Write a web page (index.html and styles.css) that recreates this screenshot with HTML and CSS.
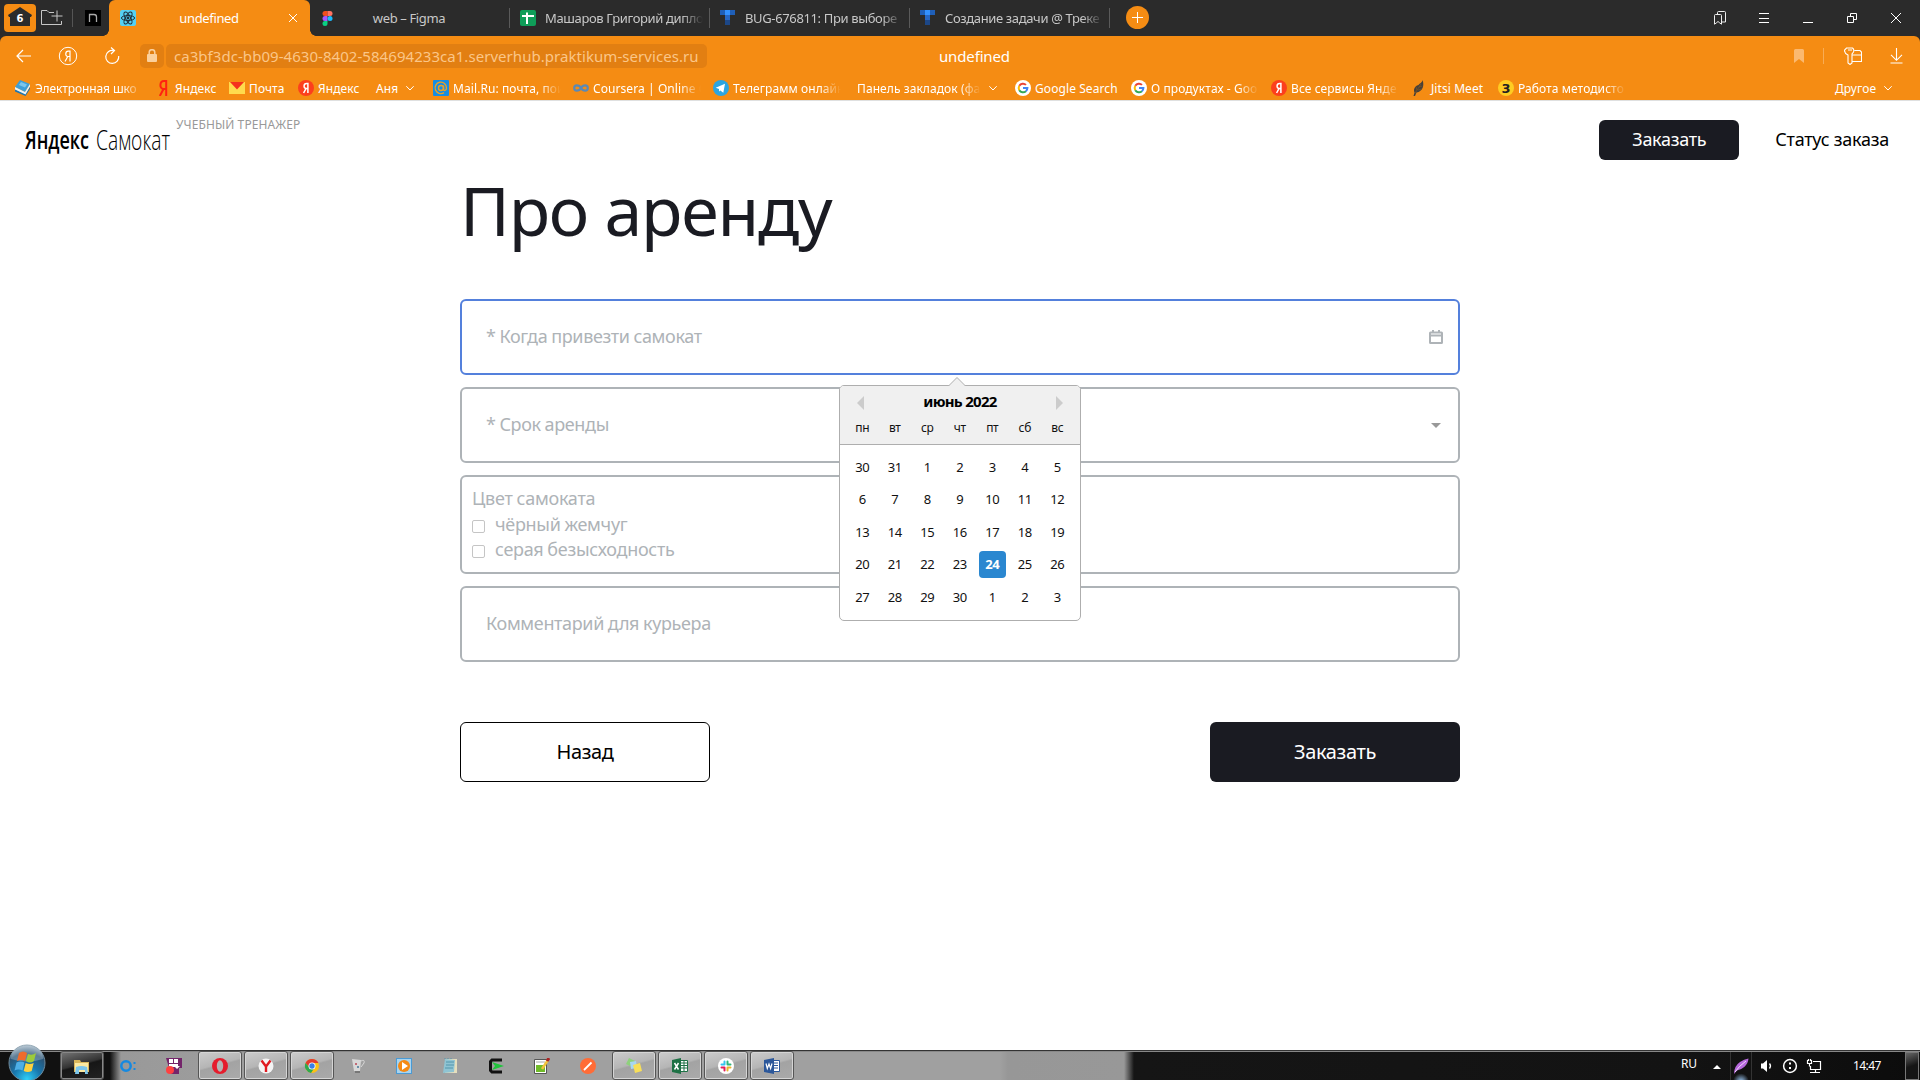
FILE: index.html
```html
<!DOCTYPE html>
<html lang="ru">
<head>
<meta charset="utf-8">
<title>undefined</title>
<link rel="stylesheet" href="styles.css">
</head>
<body>
<svg class="defs" width="0" height="0">
  <symbol id="tracker" viewBox="0 0 16 16"><path fill="#1f5fb8" d="M0 0h15v5H0z"/><path fill="#3391ff" d="M5 0h5v5H5z"/><path fill="#2767c4" d="M5 5h5v5H5z"/><path fill="#1c4787" d="M5 10h5v5H5z"/></symbol>
  <symbol id="google" viewBox="0 0 16 16"><circle cx="8" cy="8" r="8" fill="#fff"/><g fill="none" stroke-width="2"><path stroke="#ea4335" d="M4.3 5.8A4.3 4.3 0 0 1 11 4.9"/><path stroke="#fbbc05" d="M4.3 10.2a4.4 4.4 0 0 1 0-4.4"/><path stroke="#34a853" d="M4.3 10.2a4.3 4.3 0 0 0 6.6 1"/><path stroke="#4285f4" d="M10.9 11.2A4.3 4.3 0 0 0 12.4 8H8"/></g></symbol>
  <symbol id="yandex" viewBox="0 0 16 16"><circle cx="8" cy="8" r="8" fill="#fc3f1d"/><path fill="none" stroke="#fff" stroke-width="1.5" d="M9.9 13V3.4H8.6C5.3 3.4 5.3 8.5 8.2 8.5h1.5M8.1 8.4 5.6 13"/></symbol>
  <symbol id="chevron" viewBox="0 0 8 8"><path fill="none" stroke="#fff" d="M.3 2.2 4 6l3.700-3.800"/></symbol>
</svg>

<header class="browser">
  <div class="tabs">
    <div class="tools">
      <svg width="32" height="28" viewBox="0 0 32 28"><rect width="32" height="28" rx="4" fill="#f58c13"/><path fill="#2b2b2b" d="M16 3 28 11l-1 2h-1v9H6v-9H5l-1-2z"/><text x="16" y="18" class="count">6</text></svg>
      <svg class="folder" width="24" height="18" viewBox="0 0 24 18"><path fill="none" stroke="#c7c7c7" d="M14 3.500H9L7 1.500H1.500v14h20V12M17 1.500v11M11.500 7h11"/></svg>
      <i class="bar"></i>
      <svg class="n" width="16" height="16" viewBox="0 0 16 16"><path d="M0 0h16v16H0z"/><path fill="none" stroke="#aaa" stroke-width="1.300" d="M4.500 12V4.500H9a2.500 2.500 0 0 1 2.500 2.500v5"/></svg>
    </div>
    <div class="tab active">
      <svg width="16" height="16" viewBox="0 0 16 16"><rect width="16" height="16" rx="2" fill="#55d1f3"/><g fill="none" stroke="#20303a"><ellipse cx="8" cy="8" rx="6.600" ry="2.500"/><ellipse cx="8" cy="8" rx="6.600" ry="2.500" transform="rotate(60 8 8)"/><ellipse cx="8" cy="8" rx="6.600" ry="2.500" transform="rotate(120 8 8)"/></g><circle cx="8" cy="8" r="1.400" fill="#20303a"/></svg>
      <span>undefined</span>
      <svg width="10" height="10" viewBox="0 0 10 10"><path stroke="#fff" d="m1 1 8 8M9 1 1 9"/></svg>
    </div>
    <div class="tab centered">
      <svg width="16" height="16" viewBox="0 0 16 16"><path fill="#f24e1e" d="M5 1h2.500v5H5a2.500 2.500 0 0 1 0-5z"/><path fill="#ff7262" d="M7.500 1H10a2.500 2.500 0 0 1 0 5H7.500z"/><path fill="#a259ff" d="M5 6h2.500v5H5a2.500 2.500 0 0 1 0-5z"/><circle cx="10" cy="8.500" r="2.500" fill="#1abcfe"/><path fill="#0acf83" d="M5 11h2.500v2.500A2.500 2.500 0 1 1 5 11z"/></svg>
      <span>web – Figma</span>
    </div>
    <div class="tab">
      <svg width="16" height="16" viewBox="0 0 16 16"><rect width="16" height="16" rx="2" fill="#0f9d58"/><path stroke="#fff" stroke-width="2" d="M2 6h12M7 2.500v11.500"/></svg>
      <span class="fade">Машаров Григорий дипло</span>
    </div>
    <div class="tab"><svg width="16" height="16"><use href="#tracker"/></svg><span class="fade">BUG-676811: При выборе</span></div>
    <div class="tab"><svg width="16" height="16"><use href="#tracker"/></svg><span class="fade">Создание задачи @ Треке</span></div>
    <svg class="plus" width="23" height="23" viewBox="0 0 23 23"><circle cx="11.500" cy="11.500" r="11.500" fill="#f58c13"/><path stroke="#fff" d="M6 11.500h11M11.500 6v11"/></svg>
    <div class="window">
      <svg width="14" height="14" viewBox="0 0 14 14"><path fill="none" stroke="#eee" d="M1.500 13.200V4.500q0-1 1-1h5q1 0 1 1v8.700L6.800 12 5 10.500 3.200 12zM4.500 3V1.500q0-1 1-1h6q1 0 1 1V11H9"/></svg>
      <svg width="12" height="12" viewBox="0 0 12 12"><path stroke="#fff" d="M1 1.500h10M1 6.500h10M1 10.500h10"/></svg>
      <svg width="12" height="12" viewBox="0 0 12 12"><path stroke="#fff" d="M1 10.500h10"/></svg>
      <svg width="12" height="12" viewBox="0 0 12 12"><path fill="none" stroke="#fff" d="M1.500 4.500h6v6h-6zM4.500 4V1.500h6v6H8"/></svg>
      <svg width="12" height="12" viewBox="0 0 12 12"><path stroke="#fff" d="m1 1 10 10M11 1 1 11"/></svg>
    </div>
  </div>

  <div class="address">
    <div class="nav">
      <svg width="16" height="16" viewBox="0 0 16 16"><path fill="none" stroke="#fff" stroke-width="1.200" d="M15 8H1.500M7 2 1 8l6 6"/></svg>
      <svg width="20" height="20" viewBox="0 0 20 20"><g fill="none" stroke="#fff"><circle cx="10" cy="10" r="8.700"/><path d="M12 15.500V5.200h-1.700C7 5.200 7 10.500 9.800 10.500H12M9.800 10.500 7 15.500" stroke-width="1.200"/></g></svg>
      <svg width="18" height="18" viewBox="0 0 18 18"><path fill="none" stroke="#fff" stroke-width="1.200" d="M10.500 3.500A6.500 6.500 0 1 0 15.700 9M8 .500l3.500 3L8 7"/></svg>
    </div>
    <div class="lock"><svg width="10" height="14" viewBox="0 0 10 14"><rect y="5" width="10" height="8" rx="1" fill="#fbd09d"/><path fill="none" stroke="#fbd09d" stroke-width="1.500" d="M2.200 6V3.500a2.800 2.800 0 0 1 5.600 0V6"/></svg></div>
    <div class="url">ca3bf3dc-bb09-4630-8402-584694233ca1.serverhub.praktikum-services.ru</div>
    <div class="title">undefined</div>
    <div class="actions">
      <svg width="10" height="14" viewBox="0 0 10 14"><path fill="#fbb970" d="M0 1.500Q0 0 1.500 0h7Q10 0 10 1.500V14L5 10 0 14z"/></svg>
      <i></i>
      <svg width="18" height="18" viewBox="0 0 18 18"><path fill="none" stroke="#fff" stroke-width="1.100" d="M2.500 1h6q2 1.500 1 4L8 7v9l-2 1.500L4 16V8Q0 6 .600 3zM4 3h4M10.500 3.500H16l1.500 1.500v9.500H8.500M8.500 8h9"/></svg>
      <svg width="13" height="16" viewBox="0 0 13 16"><path fill="none" stroke="#fff" stroke-width="1.100" d="M6.500 0v12M1 6.800l5.500 5.500L12 6.800M.500 15h12"/></svg>
    </div>
  </div>

  <nav class="bookmarks">
    <a><svg width="16" height="16" viewBox="0 0 16 16"><path fill="#3d9fd8" d="m5 0 10 4-5 8L0 7z"/><path fill="#7cc6ec" d="m6 2 6 2.500-2 3-6-2.500z"/><path fill="#e9f4f8" d="m0 7 10 5 5-8v2.500L10.500 15 0 10z"/><path fill="#1c75b0" d="m0 9.500 10.500 5L15 7v2l-4.500 7L0 11.500z"/></svg><span class="fade">Электронная шко</span></a>
    <a><svg width="16" height="16" viewBox="0 0 16 16"><path fill="none" stroke="#f21" stroke-width="2" d="M11.200 16V1H9C4.300 1 4.300 9 8.500 9H11M8.500 9 4.800 16"/></svg><span>Яндекс</span></a>
    <a><svg width="16" height="16" viewBox="0 0 16 16"><path fill="#ffdb4d" d="M0 2h16v12H0z"/><path fill="#f5311e" d="M1 2h14L8 9.500z"/></svg><span>Почта</span></a>
    <a><svg width="16" height="16"><use href="#yandex"/></svg><span>Яндекс</span></a>
    <a class="menu"><span>Аня</span><svg width="8" height="8"><use href="#chevron"/></svg></a>
    <a><svg width="16" height="16" viewBox="0 0 16 16"><rect width="16" height="16" rx="1" fill="#168de2"/><g fill="none" stroke="#e9a126" stroke-width="1.400"><circle cx="8" cy="8" r="2.500"/><path d="M10.500 5.500v3.700c0 2 3 1.500 3-1.200A5.700 5.700 0 1 0 11 12.600"/></g></svg><span class="fade">Mail.Ru: почта, пои</span></a>
    <a><svg width="16" height="16" viewBox="0 0 16 16"><path fill="none" stroke="#5b89b5" stroke-width="2.200" d="M8 8C6 4.500 1.200 4.500 1.200 8S6 11.500 8 8s6.800-3.500 6.800 0S10 11.500 8 8z"/></svg><span class="fade">Coursera | Online C</span></a>
    <a><svg width="16" height="16" viewBox="0 0 16 16"><circle cx="8" cy="8" r="8" fill="#2ca5e0"/><path fill="#fff" d="m2.700 7.800 9.300-4-1.700 9-3-2.200L6 11.500V9z"/></svg><span class="fade">Телеграмм онлайн</span></a>
    <a class="menu wide"><span class="fade">Панель закладок (фа</span><svg width="8" height="8"><use href="#chevron"/></svg></a>
    <a><svg width="16" height="16"><use href="#google"/></svg><span>Google Search</span></a>
    <a><svg width="16" height="16"><use href="#google"/></svg><span class="fade">О продуктах - Goo</span></a>
    <a><svg width="16" height="16"><use href="#yandex"/></svg><span class="fade">Все сервисы Янде</span></a>
    <a><svg width="16" height="16" viewBox="0 0 16 16"><path fill="#46403a" d="M11.500 0c2 5 .500 11.500-6 12.500L4 16H2.500l1-3.500C1.500 8 6 5 7.500 5 9 3 11 3 11.500 0z"/><path stroke="#8b5a22" stroke-width=".6" fill="none" d="M3.500 14 10 4M6 10 5 7m2 3 4-1M8 7l3.500-1"/></svg><span>Jitsi Meet</span></a>
    <a><svg width="16" height="16" viewBox="0 0 16 16"><circle cx="8" cy="8" r="8" fill="#fc2"/><text x="8" y="12.800" class="three">3</text></svg><span class="fade">Работа методисто</span></a>
    <a class="menu"><span>Другое</span><svg width="8" height="8"><use href="#chevron"/></svg></a>
  </nav>
</header>

<main class="page">
  <div class="top">
    <svg class="logo" width="146" height="40" viewBox="0 0 146 40"><text x="0" y="29" textLength="64" lengthAdjust="spacingAndGlyphs" class="bold">Яндекс</text><text x="71" y="30" textLength="74" lengthAdjust="spacingAndGlyphs" class="light">Самокат</text></svg>
    <span class="trainer">УЧЕБНЫЙ ТРЕНАЖЕР</span>
    <button class="order">Заказать</button>
    <span class="status">Статус заказа</span>
  </div>

  <section class="rent">
    <h1>Про аренду</h1>
    <div class="fields">
      <div class="field focused">
        <span>* Когда привезти самокат</span>
        <svg width="14" height="14" viewBox="0 0 14 14"><path fill="#aeb3b7" fill-rule="evenodd" d="M3 0h2v1.500h4V0h2v1.500h1.500Q14 1.500 14 3v9.500q0 1.500-1.500 1.500h-11Q0 14 0 12.500V3q0-1.500 1.500-1.500H3zM2 3.500v1h10v-1zM2 6.500V12h10V6.500z"/></svg>
        <div class="calendar">
          <svg class="tip" width="18" height="9" viewBox="0 0 18 9"><path fill="#f0f0f0" stroke="#aeaeae" d="m.500 9 8.500-8.500L17.500 9"/></svg>
          <div class="month">
            <div class="month-row"><i class="prev"></i><strong>июнь 2022</strong><i class="next"></i></div>
            <div class="days names"><span>пн</span><span>вт</span><span>ср</span><span>чт</span><span>пт</span><span>сб</span><span>вс</span></div>
          </div>
          <div class="days dates">
            <span>30</span><span>31</span><span>1</span><span>2</span><span>3</span><span>4</span><span>5</span>
            <span>6</span><span>7</span><span>8</span><span>9</span><span>10</span><span>11</span><span>12</span>
            <span>13</span><span>14</span><span>15</span><span>16</span><span>17</span><span>18</span><span>19</span>
            <span>20</span><span>21</span><span>22</span><span>23</span><span class="selected">24</span><span>25</span><span>26</span>
            <span>27</span><span>28</span><span>29</span><span>30</span><span>1</span><span>2</span><span>3</span>
          </div>
        </div>
      </div>
      <div class="field"><span>* Срок аренды</span><i class="caret"></i></div>
      <div class="field colors">
        <span>Цвет самоката</span>
        <label><i></i>чёрный жемчуг</label>
        <label><i></i>серая безысходность</label>
      </div>
      <div class="field"><span>Комментарий для курьера</span></div>
    </div>
    <div class="buttons"><button class="back">Назад</button><button>Заказать</button></div>
  </section>
</main>

<footer class="taskbar">
  <div class="start"><svg width="38" height="36" viewBox="0 0 38 36">
    <defs><radialGradient id="orb" cx=".5" cy=".95" r=".95"><stop offset="0" stop-color="#2fd0f8"/><stop offset=".4" stop-color="#1877ae"/><stop offset=".75" stop-color="#2a5374"/><stop offset="1" stop-color="#a8bccb"/></radialGradient></defs>
    <circle cx="19" cy="19" r="18" fill="url(#orb)" stroke="#6f8b9d"/><path fill="#fff" opacity=".25" d="M3 15a16 16 0 0 1 32 0q-16 5-32 0z"/>
    <path fill="#ee6b2c" d="M11 9q4-3 8 0l-2 8q-4-2-8 0z"/><path fill="#9ccb3c" d="M20 10q4 2 8-1l-2 8q-4 3-8 0z"/><path fill="#4eaee6" d="M8.500 18.500q4-2 8 0l-2 8q-4-2-8 0z"/><path fill="#fdd13f" d="M17.700 19q4 2 8 0l-2 8q-4 2-8 0z"/></svg></div>
  <div class="apps">
    <div class="app open dark"><svg width="17" height="16" viewBox="0 0 17 16"><path fill="#d9b75c" d="M1 2h6l1 2h8v10H1z"/><path fill="#fbe9a2" d="M2 5h13v9H2z"/><path fill="#7cc5ea" d="M3 9q5-2 11 0l1 7h-3v-4H6v4H2z"/></svg></div>
    <div class="app"><svg width="18" height="16" viewBox="0 0 18 16"><circle cx="7" cy="8" r="4.700" fill="none" stroke="#1689e0" stroke-width="2.500"/><path stroke="#1689e0" stroke-width="2" d="M15.500 4v2M15.500 10v2"/></svg></div>
    <div class="app"><svg width="16" height="16" viewBox="0 0 16 16"><path fill="#74246a" d="M0 0h16v10h-3v6H5z"/><path fill="#fff" d="M3 1h4v4H3zM8 1h4v4H8zM3 6h9v2h2l-3 3-2-2H3z"/><circle cx="4" cy="12" r="4" fill="#ff4040"/></svg></div>
    <div class="app open"><svg width="16" height="16" viewBox="0 0 16 16"><circle cx="8" cy="8" r="8" fill="#e51c2c"/><ellipse cx="8" cy="8" rx="3.200" ry="5.800" fill="#b4b4b4"/></svg></div>
    <div class="app open"><svg width="16" height="16" viewBox="0 0 16 16"><circle cx="8" cy="8" r="7.500" fill="#f4f4f4"/><path fill="none" stroke="#e01a20" stroke-width="2.400" d="m3.500 2.500 4.500 6v5.500M12.500 2.500 8 8.500"/></svg></div>
    <div class="app open"><svg width="16" height="16" viewBox="0 0 16 16"><circle cx="8" cy="8" r="7" fill="#fbc116"/><path fill="#e33b2e" d="M1.500 5A7.200 7.200 0 0 1 14.500 5H8L5 9z"/><path fill="#2da94f" d="M1.500 5A7.200 7.200 0 0 0 7 15l4-6H5z"/><circle cx="8" cy="8" r="3.500" fill="#fff"/><circle cx="8" cy="8" r="2.700" fill="#397ee8"/></svg></div>
    <div class="app"><svg width="16" height="16" viewBox="0 0 16 16"><path fill="#d8d8d8" d="m2 1 9 1-1 11H4z"/><path fill="none" stroke="#d8d8d8" d="M11 3q4-2 3 2l-3 4"/><path fill="#777" d="M5 13h5v2H5z"/><circle cx="6" cy="6" r="1" fill="#b45"/><circle cx="8" cy="9" r="1" fill="#479"/></svg></div>
    <div class="app"><svg width="16" height="16" viewBox="0 0 16 16"><path fill="#4a9ad4" d="M0 0h16v16H0z"/><path fill="#a9d4ef" d="M1 1h14v14H1z"/><circle cx="8" cy="8" r="6" fill="#f58a14"/><path fill="#fff" d="m6 4 6 4-6 4z"/></svg></div>
    <div class="app"><svg width="16" height="16" viewBox="0 0 16 16"><path fill="#e6dfbd" d="M3 1h12v14H3z"/><path fill="#8fc4d3" d="m3 1 10 1-1 12-11 1z"/><path stroke="#5296ac" d="M4 4h8M4 7h8M3 10h8M3 1V0m3 1V0m3 1V0"/></svg></div>
    <div class="app"><svg width="16" height="16" viewBox="0 0 16 16"><path fill="none" stroke="#111" stroke-width="3" d="M14 2H4L2.500 3.500v9L4 14h10"/><path fill="#1fc43b" d="m4 4 12 4-12 4 3-4z"/></svg></div>
    <div class="app"><svg width="16" height="16" viewBox="0 0 16 16"><path fill="#fff" stroke="#555" d="M.500 1.500h12v14H.500z"/><path fill="#70bb29" d="M2 7h9v7H2z"/><path stroke="#a8a8a8" d="M2 4h9"/><path stroke="#f2c33c" stroke-width="2.500" d="m8 11 6-9"/><path stroke="#a22" stroke-width="3" d="m13 3 2-3"/></svg></div>
    <div class="app"><svg width="16" height="16" viewBox="0 0 16 16"><circle cx="8" cy="8" r="8" fill="#ff6c37"/><path stroke="#fff" stroke-width="1.800" d="m4 12 7.500-7.500"/></svg></div>
    <div class="app open"><svg width="16" height="16" viewBox="0 0 16 16"><path fill="#8ed17c" d="m3 0 6 3-3 6-6-3z"/><path fill="#a8d6f4" d="m4 4 6-1 1 7-6 1z"/><path fill="#f8df59" d="m7 7 7-2 2 8-7 2z"/></svg></div>
    <div class="app open"><svg width="16" height="16" viewBox="0 0 16 16"><path fill="#fff" stroke="#1e7145" d="M8 2.500h7.500v11H8z"/><path stroke="#1e7145" d="M9 5h6M9 7.500h6M9 10h6M12 3v10"/><path fill="#1e7145" d="m0 2 9-2v16l-9-2z"/><path stroke="#fff" stroke-width="1.500" d="m2.500 5 4 6.500m0-6.500-4 6.500"/></svg></div>
    <div class="app open"><svg width="16" height="16" viewBox="0 0 16 16"><circle cx="8" cy="8" r="8" fill="#fff"/><g stroke-width="2" stroke-linecap="round"><path stroke="#36c5f0" d="M6.500 3.500v3M3.500 6.500h3"/><path stroke="#2eb67d" d="M9.500 3.500v3M9.500 6.500h3"/><path stroke="#e01e5a" d="M6.500 9.500v3M3.500 9.500h3"/><path stroke="#ecb22e" d="M9.500 9.500v3M9.500 9.500h3"/></g></svg></div>
    <div class="app open"><svg width="16" height="16" viewBox="0 0 16 16"><path fill="#fff" stroke="#2b579a" d="M8 2.500h7.500v11H8z"/><path stroke="#2b579a" d="M9 5h5M9 7.500h5M9 10h5"/><path fill="#2b579a" d="m0 2 10-2v16L0 14z"/><path fill="none" stroke="#fff" stroke-width="1.200" d="m2 5.500 1.300 5L5 6l1.600 4.500L8 5.500"/></svg></div>
  </div>
  <div class="tray">
    <span class="lang">RU</span>
    <i class="up"></i>
    <div class="feather"><svg width="16" height="16" viewBox="0 0 16 16"><path fill="#b668dc" d="M15.500.500C15 7 10 11 4 12.500L1 16q0-8 6-12 4-3 8.500-3.500z"/><path stroke="#f1d9fb" fill="none" d="M2 14Q6 8 13 3"/></svg></div>
    <svg width="14" height="14" viewBox="0 0 14 14"><path fill="#fff" d="M1 4.500h2L7 1v12L3 9.500H1z"/><path fill="none" stroke="#fff" stroke-width="1.300" d="M9.500 4.500q2 2.500 0 5"/></svg>
    <svg width="16" height="16" viewBox="0 0 16 16"><circle cx="8" cy="8" r="6.400" fill="none" stroke="#fff" stroke-width="1.500"/><path fill="#fff" d="M7 4.500h2v2H7zM7 9h2v2H7z"/></svg>
    <svg width="16" height="16" viewBox="0 0 16 16"><path fill="none" stroke="#fff" stroke-width="1.200" d="M7 3.500h7.500v8H4.500V8M4 14.500h10M9.500 12v2M1.500 2v3.500h4V2M3.500 6v2.500M2.500 1v2M4.500 1v2"/></svg>
    <span class="clock">14:47</span>
    <i class="desktop"></i>
  </div>
</footer>
</body>
</html>
```
FILE: styles.css
```css
* { box-sizing: border-box; }
body {
  margin: 0;
  height: 1080px;
  overflow: hidden;
  display: flex;
  flex-direction: column;
  background: #fff;
  color: #000;
  font-family: "Noto Sans", sans-serif;
}
svg { flex: none; display: block; }
.defs { position: absolute; }
.fade {
  overflow: hidden;
  -webkit-mask-image: linear-gradient(to right, #000 calc(100% - 21px), transparent);
  mask-image: linear-gradient(to right, #000 calc(100% - 21px), transparent);
}

/* Browser window */
.browser { height: 101px; flex: none; background: #2b2b2b; border-bottom: 1px solid #dfe0e0; }
.tabs { display: flex; height: 36px; font-size: 13px; letter-spacing: -.36px; color: #c8c8c8; }
.tools { display: flex; align-items: center; width: 109px; padding-left: 4px; flex: none; }
.folder { margin-left: 4px; }
.bar { width: 1px; height: 18px; margin: 0 12px 0 8px; background: #555; }
.count { fill: #fff; font: bold 10px "DejaVu Sans", sans-serif; text-anchor: middle; letter-spacing: 0; }
.tab { display: flex; align-items: center; gap: 9px; width: 200px; flex: none; padding-left: 11px; position: relative; white-space: nowrap; }
.tab span { width: 158px; line-height: 22px; }
.tab:not(.active)::after { content: ""; position: absolute; right: -1px; top: 8px; width: 1px; height: 20px; background: #5a5a5a; }
.active { width: 201px; background: #f58c13; border-radius: 6px 6px 0 0; color: #fff; gap: 0; margin-right: -1px; }
.active::before, .active::after { content: ""; position: absolute; bottom: 0; width: 6px; height: 6px; }
.active::before { left: -6px; background: radial-gradient(circle at 0 0, transparent 5.500px, #f58c13 6px); }
.active::after { right: -6px; background: radial-gradient(circle at 100% 0, transparent 5.500px, #f58c13 6px); }
.active span { width: 146px; text-align: center; }
.active svg:last-child { margin-left: 6px; }
.centered { gap: 0; }
.centered span { width: 146px; text-align: center; }
.plus { margin: 6px 0 0 17px; }
.window { margin-left: auto; padding-right: 2px; display: flex; align-items: center; }
.window svg { margin: 0 16px; }
.window svg:first-child { margin: 0 15px; }

.address { display: flex; align-items: center; height: 40px; background: #f58c13; border-radius: 6px 6px 0 0; }
.nav { display: flex; width: 140px; padding-left: 16px; gap: 25px; align-items: center; }
.nav svg:nth-child(2) { margin-left: 1px; }
.lock { width: 24px; height: 24px; border-radius: 5px; background: #e27f12; display: grid; place-items: center; }
.url { width: 541px; height: 24px; margin-left: 2px; padding-left: 8px; border-radius: 5px; background: #e27f12; color: #fbc688; font: 15px/24px "Noto Sans", sans-serif; letter-spacing: .05px; white-space: nowrap; }
.title { margin-left: 232px; font-size: 15px; letter-spacing: -.15px; color: #fff; }
.actions { margin-left: auto; display: flex; align-items: center; padding-right: 17px; }
.actions i { width: 1px; height: 16px; background: #f8ac55; margin: 0 20px 0 19px; }
.actions svg:last-child { margin-left: 28px; }

.bookmarks {
  display: grid;
  grid-template-columns: 140px 74px 69px 78px 57px 140px 140px 144px 158px 116px 140px 140px 87px 337px 1fr;
  align-items: center;
  height: 24px;
  padding-left: 15px;
  background: #f58c13;
  color: #fff;
  font-size: 12px;
  letter-spacing: .08px;
  white-space: nowrap;
}
.bookmarks a { display: flex; align-items: center; gap: 4px; }
.bookmarks a:first-child { letter-spacing: -.1px; }
.bookmarks .fade { width: 108px; }
.bookmarks .menu { gap: 8px; }
.bookmarks .wide .fade { width: 124px; }
.three { font: bold 13px "DejaVu Sans", sans-serif; text-anchor: middle; fill: #222; }

/* Page */
.page { flex: 1; }
.top { display: flex; height: 78px; padding-left: 25px; }
.logo { margin-top: 19px; }
.bold { font: 600 26px "Open Sans", sans-serif; }
.light { font: 300 28px "Open Sans", sans-serif; }
.trainer { margin: 15px 0 0 5px; font-size: 12px; line-height: 18px; color: #999; letter-spacing: .1px; }
button { border: 0; border-radius: 6px; background: #1a1b22; color: #fff; font-family: inherit; padding: 0 0 2px; }
.order { width: 140px; height: 40px; margin: 19px 36px 0 auto; font-size: 18px; letter-spacing: -.3px; }
.status { margin-top: 25px; padding-right: 31px; font-size: 18px; line-height: 26px; letter-spacing: -.26px; }
.rent { width: 1000px; margin: 0 auto; }
h1 { margin: 0; height: 120px; font-size: 68px; line-height: 62px; font-weight: 400; letter-spacing: -1.2px; color: #1a1b22; }
.fields { display: flex; flex-direction: column; gap: 12px; }
.field { position: relative; display: flex; align-items: center; justify-content: space-between; height: 76px; border: 2px solid #aeb3b7; border-radius: 6px; padding: 0 15px 0 24px; color: #aeb3b7; font-size: 18px; letter-spacing: -.35px; word-spacing: -.5px; }
.field > span { line-height: 26px; padding-bottom: 2px; }
.field > svg { margin-bottom: 1px; }
.focused { border-color: #5480dc; z-index: 2; }
.caret { margin-right: 2px; border: 5px solid transparent; border-top-color: #999; border-bottom: 0; }
.colors { height: 99px; flex-direction: column; align-items: flex-start; justify-content: flex-start; padding: 8px 10px; letter-spacing: -.25px; }
.colors > span { padding: 0; }
.colors label { display: flex; align-items: center; gap: 10px; height: 25.500px; letter-spacing: -.3px; }
.colors i { width: 13px; height: 13px; border: 1px solid #c5c5c5; border-radius: 2px; margin-top: 5px; }
.buttons { display: flex; justify-content: space-between; margin-top: 60px; }
.buttons button { width: 250px; height: 60px; font-size: 20px; letter-spacing: -.35px; }
.buttons .back { background: #fff; color: #000; border: 1px solid #000; }

.calendar { position: absolute; left: 377px; top: 84px; width: 242px; height: 236px; border: 1px solid #aeaeae; border-radius: 5px; background: #fff; color: #111; font-size: 13px; letter-spacing: -.4px; word-spacing: 0; }
.tip { position: absolute; left: 108px; top: -9px; }
.month { height: 59px; background: #f0f0f0; border-bottom: 1px solid #aeaeae; border-radius: 4px 4px 0 0; }
.month-row { display: flex; justify-content: space-between; align-items: center; padding: 0 17px; height: 32px; font-size: 15px; letter-spacing: -.7px; color: #000; }
.month-row strong { padding-bottom: 2px; }
.month-row i { border: 7px solid transparent; margin-top: 2px; }
.month-row .prev { border-right-color: #ccc; border-left: 0; }
.month-row .next { border-left-color: #ccc; border-right: 0; }
.days { display: grid; grid-template-columns: repeat(7, 32.500px); justify-items: center; padding-left: 6px; }
.names span { line-height: 19px; font-size: 12px; }
.dates { grid-auto-rows: 32.500px; align-items: center; padding-top: 5.500px; }
.days .selected { width: 27px; height: 27px; line-height: 27px; text-align: center; border-radius: 4px; background: #2a87d0; color: #fff; font-weight: 700; }

/* Taskbar */
.taskbar { flex: none; height: 30px; display: flex; border-top: 1px solid #333; box-shadow: inset 0 1px #888; background: linear-gradient(to right, #111 110px, #999 121px, #a0a0a0 300px, #a0a0a0 1000px, #979797 1008px, #989898 1124px, #151515 1134px, #131313 1680px, #0c0c0c); }
.start { width: 58px; padding-left: 8px; margin-top: -7px; z-index: 1; }
.apps { display: flex; gap: 2px; padding-left: 1.500px; }
.app { width: 44px; height: 29px; display: grid; place-items: center; }
.open { border: 1px solid #555; border-radius: 3px; box-shadow: inset 0 0 0 1px #d5d5d5; background: linear-gradient(165deg, #ccc 0, #b5b5b5 45%, #a3a3a3 50%, #aaa); }
.dark { box-shadow: inset 0 0 0 1px #888; background: linear-gradient(165deg, #777, #333 45%, #161616 50%, #222); }
.tray { margin-left: auto; display: flex; align-items: center; color: #fff; padding-right: 1px; }
.lang { font-size: 12px; margin: -5px 16px 0 0; letter-spacing: -.1px; }
.up { border: 4px solid transparent; border-bottom-color: #fff; border-top: 0; margin-top: 2px; }
.feather { width: 22px; height: 28px; margin: 0 8px 0 9px; border: solid #333; border-width: 0 1px; display: grid; place-items: center; background: radial-gradient(circle at 50% 105%, #9cc8f4, transparent 8px); }
.tray > svg { margin-right: 8px; }
.clock { margin-left: 23px; width: 32px; font-size: 12px; letter-spacing: -.6px; }
.desktop { width: 14px; height: 28px; margin-left: 20px; border: 1px solid #777; background: linear-gradient(160deg, #666, #151515 50%); }
```
